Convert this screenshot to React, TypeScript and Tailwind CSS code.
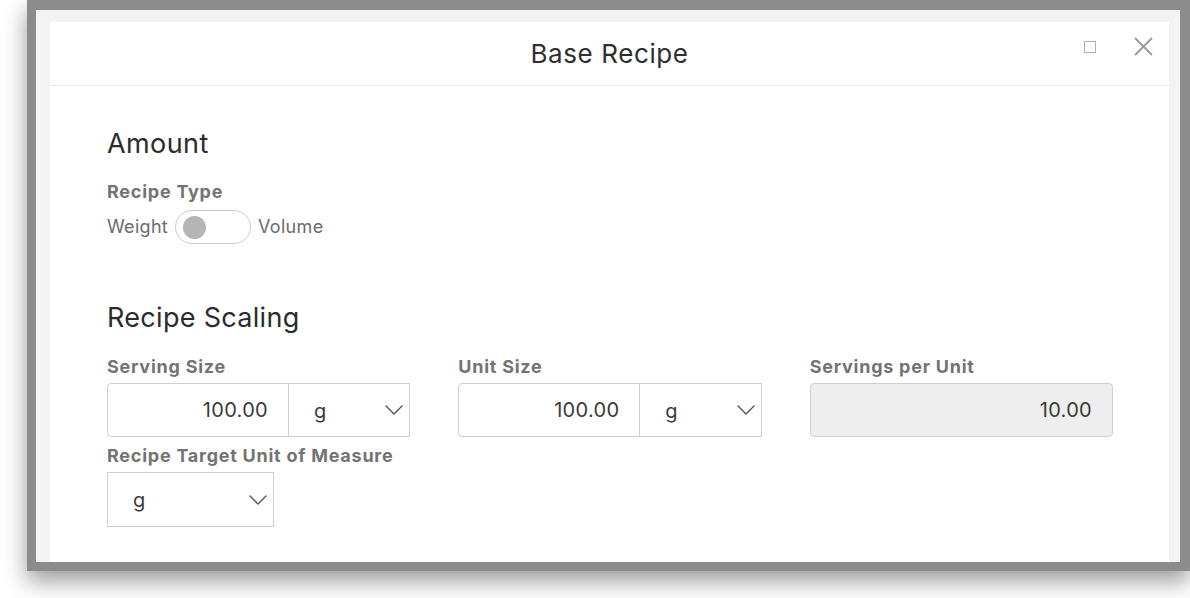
import React from "react";

function Chevron() {
  return (
    <svg width="18" height="10" viewBox="0 0 18 10" fill="none" className="shrink-0">
      <path d="M1 1 L9 9 L17 1" stroke="#555" strokeWidth="1.4" strokeLinecap="round" strokeLinejoin="round" />
    </svg>
  );
}

function Label({ children }: { children: React.ReactNode }) {
  return <div className="text-[18px] leading-[24px] font-bold tracking-[0.75px] text-[#737373]">{children}</div>;
}

function AmountUnit({ value }: { value: string }) {
  return (
    <div className="flex h-[54px] w-full">
      <div className="w-[60%] h-full border border-[#cfcfcf] rounded-l-[4px] flex items-center justify-end pr-[20px] text-[20px] tracking-[0.3px] text-[#3a3a3a]">
        {value}
      </div>
      <div className="flex-1 h-full border border-l-0 border-[#cfcfcf] flex items-center justify-between pl-[25px] pr-[6px] text-[20px] text-[#3a3a3a]">
        <span className="mt-[1px]">g</span>
        <Chevron />
      </div>
    </div>
  );
}

export default function App() {
  return (
    <div className="w-[1190px] h-[598px] bg-white overflow-hidden font-['Inter',sans-serif]">
      <div className="ml-[27px] w-[1163px] h-[571px] border-[#8c8c8c] border-l-[9px] border-t-[10px] border-r-[10px] border-b-[9px] bg-[#f3f3f3] shadow-[0_10px_22px_rgba(0,0,0,0.4)] pt-[12px] pl-[14px] pr-[11px]">
        <div className="bg-white h-full flex flex-col">
          <div className="relative h-[64px] border-b border-[#ebebeb] flex items-center justify-center shrink-0">
            <span className="text-[26px] leading-[32px] tracking-[0.6px] text-[#2f2f2f]">Base Recipe</span>
            <div className="absolute right-[16px] top-[15px] flex items-center gap-[38px]">
              <div className="w-[12px] h-[12px] border border-[#b0b0b0]" />
              <svg width="19" height="19" viewBox="0 0 19 19" fill="none">
                <path d="M1 1 L18 18 M18 1 L1 18" stroke="#9a9a9a" strokeWidth="1.8" />
              </svg>
            </div>
          </div>
          <div className="pl-[57px] pr-[56px] pt-[42px]">
            <div className="text-[27px] leading-[32px] tracking-[0.4px] text-[#2b2b2b]">Amount</div>
            <div className="mt-[20px]">
              <Label>Recipe Type</Label>
            </div>
            <div className="mt-[6px] flex items-center gap-[7px] text-[18px] leading-[24px] tracking-[0.3px] text-[#6b6b6b]">
              <span>Weight</span>
              <div className="w-[76px] h-[34px] rounded-full border border-[#cdcdcd] flex items-center pl-[7px]">
                <div className="w-[23px] h-[23px] rounded-full bg-[#b5b5b5]" />
              </div>
              <span>Volume</span>
            </div>
            <div className="mt-[58px] text-[27px] leading-[32px] tracking-[0.3px] text-[#2b2b2b]">Recipe Scaling</div>
            <div className="mt-[21px] grid grid-cols-3 gap-x-[48px]">
              <div className="flex flex-col gap-[4px]">
                <Label>Serving Size</Label>
                <AmountUnit value="100.00" />
              </div>
              <div className="flex flex-col gap-[4px]">
                <Label>Unit Size</Label>
                <AmountUnit value="100.00" />
              </div>
              <div className="flex flex-col gap-[4px]">
                <Label>Servings per Unit</Label>
                <div className="h-[54px] w-full border border-[#cfcfcf] rounded-[4px] bg-[#eeeeee] flex items-center justify-end pr-[20px] text-[20px] tracking-[0.3px] text-[#3a3a3a]">
                  10.00
                </div>
              </div>
            </div>
            <div className="mt-[7px]">
              <Label>Recipe Target Unit of Measure</Label>
            </div>
            <div className="mt-[4px] w-[167px] h-[55px] border border-[#cfcfcf] flex items-center justify-between pl-[25px] pr-[6px] text-[20px] text-[#3a3a3a]">
              <span className="mt-[1px]">g</span>
              <Chevron />
            </div>
          </div>
        </div>
      </div>
    </div>
  );
}
